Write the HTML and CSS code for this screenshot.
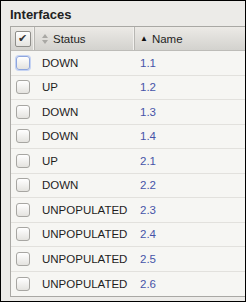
FILE: index.html
```html
<!DOCTYPE html>
<html lang="en">
<head>
    <meta charset="UTF-8">
    <title>Interfaces</title>
    <link rel="stylesheet" href="styles.css">
</head>
<body>
    <div class="panel">
        <h2 class="panel-title">Interfaces</h2>
        <div class="grid">
            <div class="grid-head">
                <div class="cell col-check"><span class="box checked">&#10004;</span></div>
                <div class="cell col-status"><span class="sort-both"></span>Status</div>
                <div class="cell col-name"><span class="sort-up">&#9650;</span>Name</div>
            </div>
            <div class="grid-body">
                <div class="row"><div class="cell col-check"><span class="box focus"></span></div><div class="cell col-status">DOWN</div><div class="cell col-name">1.1</div></div>
                <div class="row"><div class="cell col-check"><span class="box"></span></div><div class="cell col-status">UP</div><div class="cell col-name">1.2</div></div>
                <div class="row"><div class="cell col-check"><span class="box"></span></div><div class="cell col-status">DOWN</div><div class="cell col-name">1.3</div></div>
                <div class="row"><div class="cell col-check"><span class="box"></span></div><div class="cell col-status">DOWN</div><div class="cell col-name">1.4</div></div>
                <div class="row"><div class="cell col-check"><span class="box"></span></div><div class="cell col-status">UP</div><div class="cell col-name">2.1</div></div>
                <div class="row"><div class="cell col-check"><span class="box"></span></div><div class="cell col-status">DOWN</div><div class="cell col-name">2.2</div></div>
                <div class="row"><div class="cell col-check"><span class="box"></span></div><div class="cell col-status">UNPOPULATED</div><div class="cell col-name">2.3</div></div>
                <div class="row"><div class="cell col-check"><span class="box"></span></div><div class="cell col-status">UNPOPULATED</div><div class="cell col-name">2.4</div></div>
                <div class="row"><div class="cell col-check"><span class="box"></span></div><div class="cell col-status">UNPOPULATED</div><div class="cell col-name">2.5</div></div>
                <div class="row"><div class="cell col-check"><span class="box"></span></div><div class="cell col-status">UNPOPULATED</div><div class="cell col-name">2.6</div></div>
            </div>
        </div>
    </div>
</body>
</html>
```

FILE: styles.css
```css
* {
    margin: 0;
    padding: 0;
    box-sizing: border-box;
}

body {
    font-family: "Liberation Sans", Arial, sans-serif;
    font-size: 11.5px;
    color: #1e1e1e;
    background: #ecebe8;
}

.panel {
    width: 246px;
    height: 302px;
    border: 1px solid #000;
    background: #ecebe8;
    padding: 6px 0 0 9px;
    overflow: hidden;
}

.panel-title {
    font-size: 13px;
    font-weight: bold;
    color: #222;
    line-height: 16px;
    height: 19px;
}

.grid {
    width: 300px;
    border: 1px solid #a9a8a4;
    background: #f6f6f3;
}

.grid-head,
.row {
    display: flex;
}

.grid-head {
    height: 24px;
    background: linear-gradient(#eceae6, #d3d2ce);
    border-bottom: 1px solid #bdbcb8;
}

.grid-head .cell {
    border-right: 1px solid #b8b7b3;
    box-shadow: inset -1px 0 0 #f2f1ee;
}

.cell {
    display: flex;
    align-items: center;
}

.col-check {
    width: 24px;
    justify-content: center;
}

.col-status {
    width: 100px;
    padding-left: 7px;
}

.col-name {
    flex: 1;
    padding-left: 5px;
}

.row {
    height: 24.5px;
    border-bottom: 1px solid #e2e1dd;
}

.row:last-child {
    border-bottom: none;
}

.row .col-name {
    color: #4654a8;
}

.box {
    width: 14px;
    height: 14px;
    border: 1px solid #a7a6a2;
    border-radius: 3px;
    background: linear-gradient(#ffffff, #e4e3df);
    display: flex;
    align-items: center;
    justify-content: center;
    font-size: 11px;
    line-height: 1;
    color: #333;
}

.box.checked {
    width: 16px;
    height: 16px;
    border-radius: 2px;
    border-color: #8f8e8a;
}

.box.focus {
    border-color: #8ea6de;
    box-shadow: 0 0 0 1px #c5d3f2;
}

.sort-both {
    display: inline-block;
    width: 7px;
    height: 10px;
    margin-right: 4px;
    position: relative;
}

.sort-both::before,
.sort-both::after {
    content: "";
    position: absolute;
    left: 0;
    border-left: 3.5px solid transparent;
    border-right: 3.5px solid transparent;
}

.sort-both::before {
    top: 0;
    border-bottom: 4px solid #a9a8a4;
}

.sort-both::after {
    bottom: 0;
    border-top: 4px solid #a9a8a4;
}

.sort-up {
    font-size: 8px;
    margin-right: 4px;
    color: #111;
}
```
